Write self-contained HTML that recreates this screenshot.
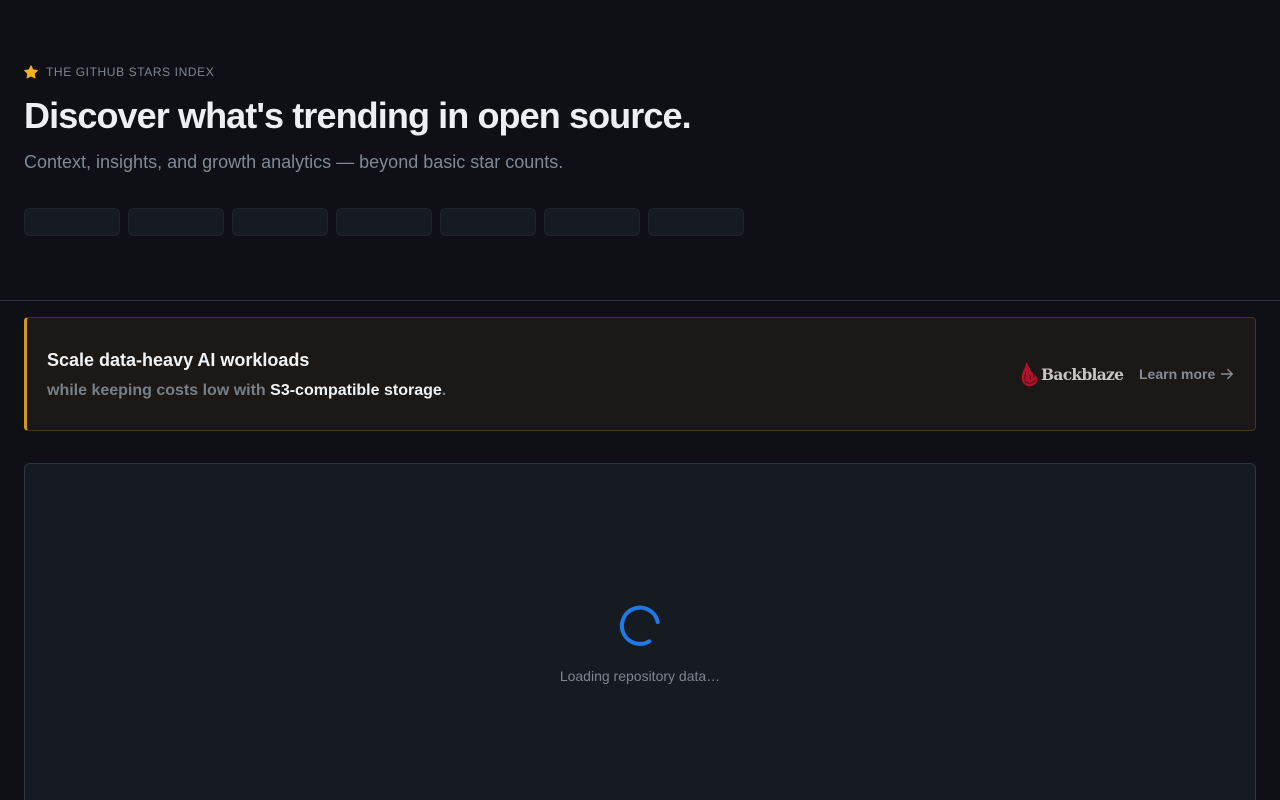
<!DOCTYPE html>
<html>
<head>
<meta charset="utf-8">
<style>
*{box-sizing:border-box;margin:0;padding:0}
html,body{width:1280px;height:800px;overflow:hidden;background:#0e1015;font-family:"Liberation Sans",sans-serif}
#root{position:relative;width:1280px;height:800px;overflow:hidden;background:#0e1015}
.abs{position:absolute;white-space:nowrap}
#eyebrow{left:46px;top:64px;font-size:12px;line-height:16px;letter-spacing:.6px;color:#7d8590}
#h1{left:24px;top:92px;font-size:36px;line-height:48px;font-weight:700;letter-spacing:-.9px;color:#eceff3}
#sub{left:24px;top:150px;font-size:18px;line-height:24px;color:#7f8a94}
.pill{position:absolute;top:208px;width:96px;height:28px;background:#161b22;border:1px solid #21262d;border-radius:6px}
#rule{position:absolute;left:0;top:300px;width:1280px;height:1px;background:#30363d}
#ad{position:absolute;left:24px;top:317px;width:1232px;height:114px;background:#1b1816;border:1px solid #4a3514;border-left:3px solid #d29922;border-radius:4px}
#t1{left:47px;top:348px;font-size:18px;line-height:24px;font-weight:700;color:#f0f3f6}
#t2{left:47px;top:381px;font-size:16px;line-height:20px;font-weight:700;color:#777f89}
#t2 b{color:#f0f3f6}
#bb{left:1041px;top:365px;font-family:"DejaVu Serif",serif;font-weight:700;font-size:15.500px;line-height:20px;letter-spacing:-.72px;color:#c8c6c2}
#lm{left:1139px;top:365px;font-size:14px;line-height:18px;font-weight:700;color:#848d97}
#panel{position:absolute;left:24px;top:463px;width:1232px;height:360px;background:#161b22;border:1px solid #30363d;border-radius:6px}
#load{left:0;width:1280px;text-align:center;top:667px;font-size:14px;line-height:18px;color:#7d8590}
svg{position:absolute;display:block}
</style>
</head>
<body>
<div id="root">
<svg style="left:24px;top:65px" width="14" height="14" viewBox="0 0 16 16"><path fill="#f5b21e" stroke="#f5b21e" stroke-width="1" stroke-linejoin="round" d="M8 .8l2.300 4.700 5.100.7-3.700 3.600.9 5.100L8 12.500l-4.600 2.400.9-5.100L.6 6.200l5.100-.7z"/></svg>
<div class="abs" id="eyebrow">THE GITHUB STARS INDEX</div>
<div class="abs" id="h1">Discover what's trending in open source.</div>
<div class="abs" id="sub">Context, insights, and growth analytics — beyond basic star counts.</div>
<div class="pill" style="left:24px"></div>
<div class="pill" style="left:128px"></div>
<div class="pill" style="left:232px"></div>
<div class="pill" style="left:336px"></div>
<div class="pill" style="left:440px"></div>
<div class="pill" style="left:544px"></div>
<div class="pill" style="left:648px"></div>
<div id="rule"></div>
<div id="ad"></div>
<div class="abs" id="t1">Scale data-heavy AI workloads</div>
<div class="abs" id="t2">while keeping costs low with <b>S3-compatible storage</b>.</div>
<svg style="left:1021px;top:362px" width="17" height="25" viewBox="0 0 17 25"><path fill="#b8102a" d="M5.500 0C4.800 3 4 5 3 7.500 1.500 10.500.8 13 .8 16.500.8 21 4.500 24.200 8.500 24.200 13 24.200 16.300 21 16.300 17.500 16.300 15.500 15.300 14 13.500 12.500 13.700 14.500 13.300 15.500 12.300 16 12.700 12.500 11.500 10.500 10 8.500 8.500 6.500 7 3 5.500 0Z"/><path fill="none" stroke="#1b1816" stroke-width=".9" d="M5 9.500C3.800 12.500 3.500 15 4.200 17.500M3.500 19c2.500 2.300 5.800 2.700 8 1.600 1.500-.8 2.500-1.800 3-3M8.500 13c1 1.500 1.100 3 .3 4.500"/></svg>
<div class="abs" id="bb">Backblaze</div>
<div class="abs" id="lm">Learn more</div>
<svg style="left:1220px;top:367px" width="14" height="14" viewBox="0 0 14 14"><path fill="none" stroke="#848d97" stroke-width="1.400" stroke-linecap="round" stroke-linejoin="round" d="M1.500 7h10.500M7.800 2.500L12.300 7l-4.500 4.500"/></svg>
<div id="panel"></div>
<svg style="left:618px;top:604px" width="44" height="44" viewBox="0 0 44 44"><path fill="none" stroke="#2079e6" stroke-width="4" stroke-linecap="round" d="M39.700 18A18.100 18.100 0 1 0 31.300 37.300"/></svg>
<div class="abs" id="load">Loading repository data…</div>
</div>
</body>
</html>
